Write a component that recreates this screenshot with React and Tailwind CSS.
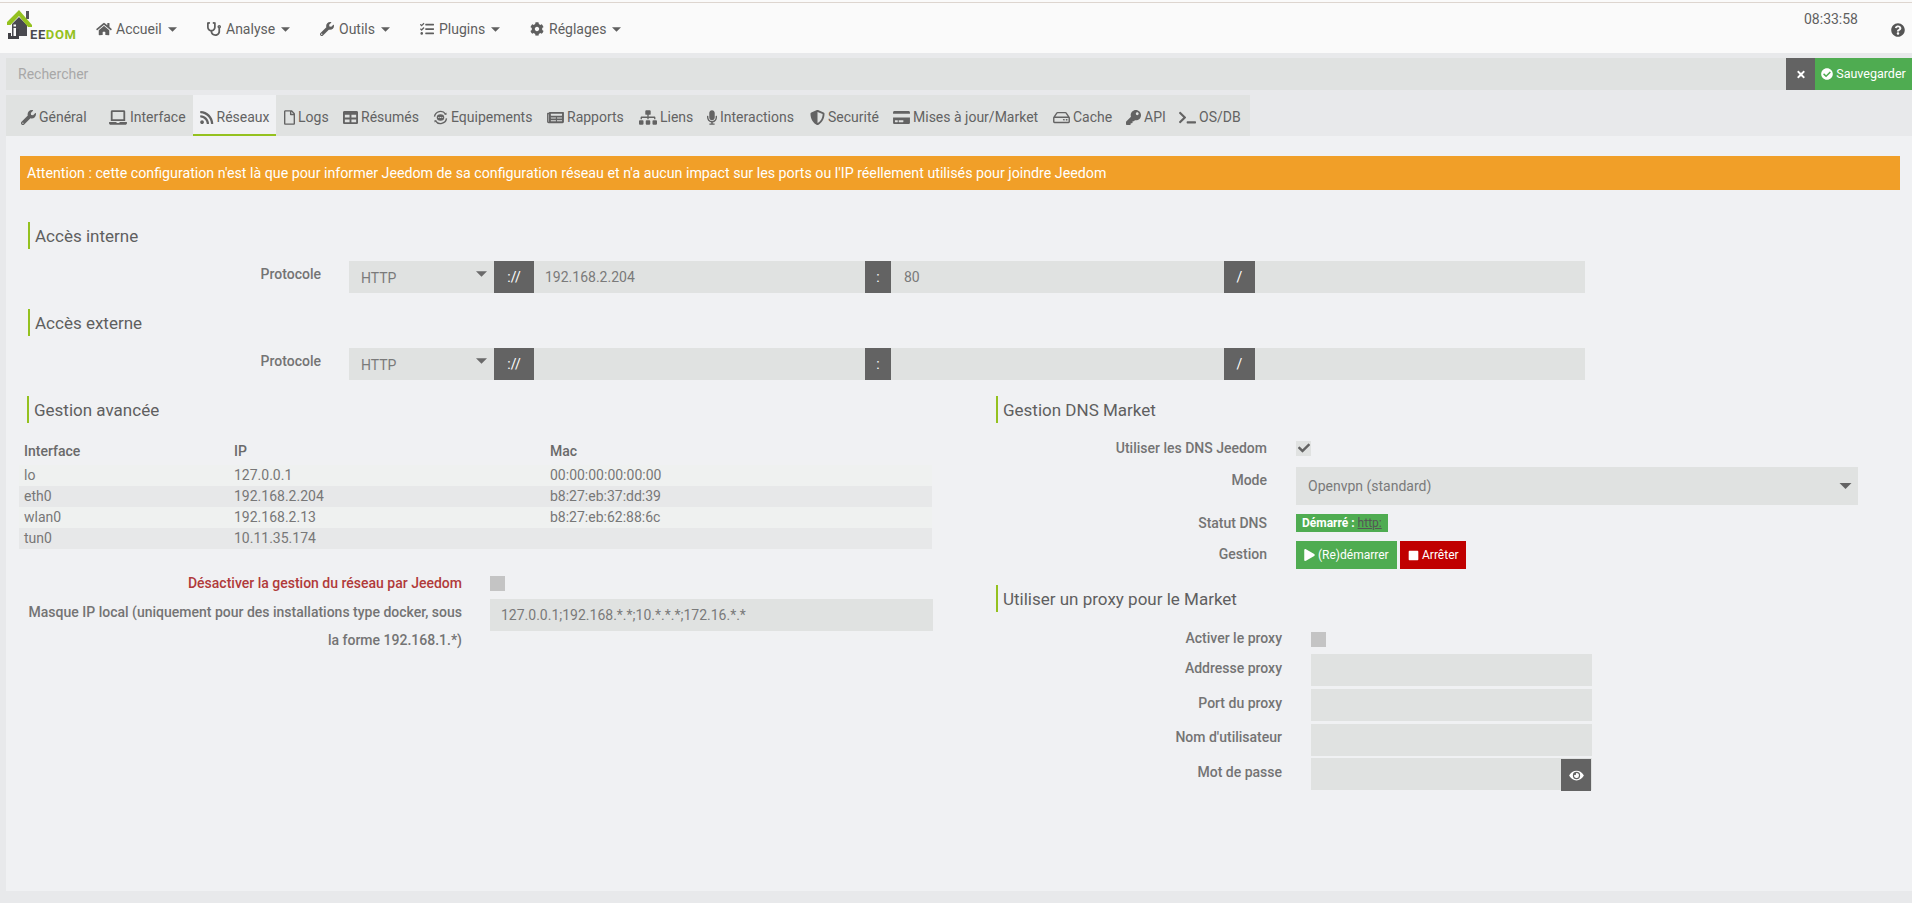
import React from "react";
import {
  FaHome, FaStethoscope, FaWrench, FaTasks, FaCog, FaQuestionCircle, FaTimes, FaCheckCircle,
  FaLaptop, FaRss, FaRegFile, FaTable, FaNewspaper, FaSitemap, FaMicrophone, FaShieldAlt,
  FaCreditCard, FaRegHdd, FaKey, FaTerminal, FaCheck, FaPlay, FaStop, FaEye,
} from "react-icons/fa";

const Caret = ({ className = "" }) => (
  <svg viewBox="0 0 10 5" className={className} fill="currentColor"><path d="M0 0h10L5 5z" /></svg>
);

const EquipIcon = ({ className = "" }) => (
  <svg viewBox="0 0 16 16" className={className} fill="none" stroke="currentColor">
    <path d="M1.6 7A6.5 6.5 0 0 1 13.4 4.4" strokeWidth="1.5" />
    <path d="M14.4 9A6.5 6.5 0 0 1 2.6 11.6" strokeWidth="1.5" />
    <path d="M12 4.8l2.3.5.2-2.6zM4 11.2l-2.3-.5-.2 2.6z" fill="currentColor" stroke="none" />
    <ellipse cx="8" cy="8" rx="4" ry="3.4" fill="currentColor" stroke="none" />
    <path d="M5.6 8h4.8" stroke="#e0e2e1" strokeWidth="1" strokeDasharray="1.2 .6" />
  </svg>
);

const Logo = () => (
  <svg viewBox="0 0 26 32" className="w-[26px] h-[32px] shrink-0">
    <rect x="19" y="2" width="3" height="8" fill="#55555a" />
    <path d="M5 15 L12 8 L20 16 V27 H5z" fill="#4a4a50" />
    <path d="M0 13 L12 1 L25 16 L25 18 L21 18 L12 7 L3.5 16 L0 16z" fill="#94c11f" />
    <path d="M6.5 19 h2.5 v8 h-2.5z M6.5 15.5 h2.5 v2 h-2.5z" fill="#fafafa" />
    <path d="M1 24 h3 v3 h5 V20 h3 v10 H1z" fill="#404045" />
  </svg>
);

const navItems = [
  [FaHome, "Accueil", "w-[110px]"],
  [FaStethoscope, "Analyse", "w-[113px]"],
  [FaWrench, "Outils", "w-[100px]"],
  [FaTasks, "Plugins", "w-[110px]"],
  [FaCog, "Réglages", "w-[100px]"],
];

const tabs = [
  [FaWrench, "Général", "w-[96px] pl-[15px]", "w-[15px]"],
  [FaLaptop, "Interface", "w-[91px] pl-[7px]", "w-[18px]"],
  [FaRss, "Réseaux", "w-[83px] pl-[7px]", "w-[13.5px]", true],
  [FaRegFile, "Logs", "w-[60px] pl-[8px]", "w-[11px]"],
  [FaTable, "Résumés", "w-[90px] pl-[7px]", "w-[15px]"],
  [EquipIcon, "Equipements", "w-[113px] pl-[7px]", "w-[15px]"],
  [FaNewspaper, "Rapports", "w-[92px] pl-[8px]", "w-[17px]"],
  [FaSitemap, "Liens", "w-[68px] pl-[8px]", "w-[18px]"],
  [FaMicrophone, "Interactions", "w-[104px] pl-[8px]", "w-[10px]"],
  [FaShieldAlt, "Securité", "w-[83px] pl-[7px]", "w-[15px]"],
  [FaCreditCard, "Mises à jour/Market", "w-[160px] pl-[7px]", "w-[17px]"],
  [FaRegHdd, "Cache", "w-[73px] pl-[7px]", "w-[17px]"],
  [FaKey, "API", "w-[53px] pl-[7px]", "w-[15px]"],
  [FaTerminal, "OS/DB", "w-[78px] pl-[7px]", "w-[17px]"],
];

const Heading = ({ children, className = "" }) => (
  <div className={`h-[27px] border-l-2 border-[#94c11f] pl-[5px] pt-[1px] flex items-center text-[17px] leading-[26px] text-[#5f5f5f] ${className}`}>
    {children}
  </div>
);

const Addon = ({ children, className = "" }) => (
  <div className={`h-[32px] bg-[#636363] text-white flex items-center justify-center text-[14px] shrink-0 ${className}`}>{children}</div>
);

const Field = ({ children, className = "" }) => (
  <div className={`h-[32px] bg-[#e0e2e1] text-[#7a7a7a] text-[14px] flex items-center shrink-0 ${className}`}>{children}</div>
);

const Label = ({ children, className = "" }) => (
  <div className={`text-right text-[14px] font-medium text-[#747474] ${className}`}>{children}</div>
);

const UrlRow = ({ ip, port, className = "" }) => (
  <div className={`flex items-start ${className}`}>
    <Label className="w-[321px] mt-[3px] leading-[20px] shrink-0">Protocole</Label>
    <Field className="ml-[28px] w-[145px] justify-between pl-[12px] pr-[7px]">
      <span className="mt-[2px]">HTTP</span>
      <Caret className="w-[11px] h-[6px] text-[#6a6a6a] mb-[6px]" />
    </Field>
    <Addon className="w-[40px]">://</Addon>
    <Field className="w-[331px] pl-[11px]">{ip}</Field>
    <Addon className="w-[26px]">:</Addon>
    <Field className="w-[333px] pl-[13px]">{port}</Field>
    <Addon className="w-[31px]">/</Addon>
    <Field className="w-[330px]" />
  </div>
);

const rows = [
  ["lo", "127.0.0.1", "00:00:00:00:00:00", "bg-[#eff1f0]"],
  ["eth0", "192.168.2.204", "b8:27:eb:37:dd:39", "bg-[#e7e8e9]"],
  ["wlan0", "192.168.2.13", "b8:27:eb:62:88:6c", "bg-[#eff1f0]"],
  ["tun0", "10.11.35.174", "", "bg-[#e7e8e9]"],
];

const Check = ({ className = "", children }) => (
  <div className={`w-[15px] h-[15px] flex items-center justify-center shrink-0 ${className}`}>{children}</div>
);

export default function App() {
  return (
    <div className="w-[1912px] h-[903px] overflow-hidden bg-[#e8e9eb] font-['Roboto',sans-serif] text-[14px] text-[#666666] flex flex-col">
      <header className="h-[53px] bg-[#fafafa] shrink-0 pt-[2px]">
        <div className="h-[1px] bg-[#ddd5cf]" />
        <div className="flex">
          <div className="ml-[7px] mt-[6px] h-[32px] flex items-end w-[83px] shrink-0">
            <Logo />
            <span className="ml-[-3px] text-[13px] leading-[11px] font-bold tracking-[0.6px] mb-[1px] whitespace-nowrap">
              <span className="text-[#4a4a50]">EE</span><span className="text-[#94c11f]">DOM</span>
            </span>
          </div>
          <nav className="flex ml-[6px] pt-[14px] text-[#5f5f5f]">
            {navItems.map(([I, t, w]) => (
              <div key={t} className={`flex items-center h-[24px] ${w}`}>
                <I className="w-[16px] h-[14px] mr-[4px] shrink-0" />
                <span>{t}</span>
                <Caret className="w-[9px] h-[5px] ml-[6px]" />
              </div>
            ))}
          </nav>
          <div className="ml-auto flex mr-[7px] text-[#5f5f5f]">
            <span className="mt-[6px] h-[20px] leading-[20px]">08:33:58</span>
            <FaQuestionCircle className="w-[14px] h-[14px] ml-[33px] mt-[20px] text-[#555555]" />
          </div>
        </div>
      </header>

      <div className="h-[32px] mt-[5px] ml-[6px] flex shrink-0">
        <div className="flex-1 bg-[#e0e2e1] text-[#a8a8a8] flex items-center px-[12px]">Rechercher</div>
        <div className="w-[29px] bg-[#636363] text-white flex items-center justify-center"><FaTimes className="w-[10px] h-[11px]" /></div>
        <div className="w-[97px] bg-[#4fac51] text-white flex items-center justify-center text-[12.5px] gap-[3px]">
          <FaCheckCircle className="w-[12px] h-[12px]" />Sauvegarder
        </div>
      </div>

      <div className="h-[41px] mt-[5px] ml-[6px] flex shrink-0">
        {tabs.map(([I, t, w, iw, active]) => (
          <div key={t} className={`${w} shrink-0 flex items-center gap-[3px] whitespace-nowrap text-[#636363] pt-[6px] border-b-2 ${active ? "bg-[#f0f1f3] border-[#94c11f]" : "bg-[#e0e2e1] border-[#e0e2e1]"}`}>
            <I className={`${iw} h-[15px] shrink-0`} />
            <span>{t}</span>
          </div>
        ))}
      </div>

      <main className="h-[755px] ml-[6px] bg-[#f0f1f3] pt-[20px] shrink-0">
        <div className="ml-[14px] mr-[12px] h-[34px] bg-[#f19f28] text-white text-[14.23px] pt-[1px] flex items-center px-[7px]">
          Attention : cette configuration n'est là que pour informer Jeedom de sa configuration réseau et n'a aucun impact sur les ports ou l'IP réellement utilisés pour joindre Jeedom
        </div>

        <Heading className="ml-[22px] mt-[32px]">Accès interne</Heading>
        <UrlRow ip="192.168.2.204" port="80" className="mt-[12px] ml-[-6px]" />
        <Heading className="ml-[22px] mt-[16px]">Accès externe</Heading>
        <UrlRow className="mt-[12px] ml-[-6px]" />

        <div className="flex mt-[16px]">
          <section className="w-[990px] shrink-0 pl-[13px]">
            <Heading className="ml-[8px]">Gestion avancée</Heading>
            <div className="w-[913px] mt-[16px]">
              <div className="grid grid-cols-[210px_316px_1fr] h-[26px] items-center pl-[5px] pb-[2px] font-medium text-[#6a6a6a]">
                <span>Interface</span><span>IP</span><span>Mac</span>
              </div>
              {rows.map(([a, b, c, bg]) => (
                <div key={a} className={`grid grid-cols-[210px_316px_1fr] h-[21px] items-center pl-[5px] text-[#777777] ${bg}`}>
                  <span>{a}</span><span>{b}</span><span>{c}</span>
                </div>
              ))}
            </div>
            <div className="flex mt-[22px] items-center h-[24px]">
              <Label className="w-[443px] text-[#b03a3a]!">Désactiver la gestion du réseau par Jeedom</Label>
              <Check className="ml-[28px] bg-[#c4c4c4]" />
            </div>
            <div className="flex mt-[4px]">
              <Label className="w-[443px] leading-[28px] mt-[-1px]">Masque IP local (uniquement pour des installations type docker, sous la forme 192.168.1.*)</Label>
              <Field className="ml-[28px] w-[443px] pl-[11px]">127.0.0.1;192.168.*.*;10.*.*.*;172.16.*.*</Field>
            </div>
          </section>

          <section className="flex-1">
            <Heading>Gestion DNS Market</Heading>
            <div className="flex items-center h-[20px] mt-[15px]">
              <Label className="w-[271px]">Utiliser les DNS Jeedom</Label>
              <Check className="ml-[29px] bg-[#e0e2e1]"><FaCheck className="w-[12px] h-[12px] text-[#636363]" /></Check>
            </div>
            <div className="flex mt-[9px] items-start">
              <Label className="w-[271px] leading-[20px] mt-[3px]">Mode</Label>
              <Field className="ml-[29px] w-[562px] h-[38px]! justify-between pl-[12px] pr-[6px]">
                <span>Openvpn (standard)</span>
                <Caret className="w-[13px] h-[6px] text-[#636363]" />
              </Field>
            </div>
            <div className="flex mt-[9px] items-center h-[18px]">
              <Label className="w-[271px]">Statut DNS</Label>
              <div className="ml-[29px] w-[92px] h-[18px] bg-[#4fac51] flex items-center px-[6px] text-[12px] leading-[18px] font-bold text-white whitespace-nowrap">
                Démarré :&nbsp;<span className="underline font-normal text-[#555555]">http:</span>
              </div>
            </div>
            <div className="flex mt-[9px] items-start">
              <Label className="w-[271px] leading-[20px] mt-[3px]">Gestion</Label>
              <div className="ml-[29px] w-[101px] h-[28px] bg-[#4fac51] text-white text-[12px] flex items-center pl-[8px] gap-[3px]"><FaPlay className="w-[11px] h-[12px]" />(Re)démarrer</div>
              <div className="ml-[3px] w-[66px] h-[28px] bg-[#c00000] text-white text-[12px] flex items-center pl-[8px] gap-[3px]"><FaStop className="w-[11px] h-[11px]" />Arrêter</div>
            </div>

            <Heading className="mt-[16px]">Utiliser un proxy pour le Market</Heading>
            <div className="flex items-center h-[20px] mt-[18px]">
              <Label className="w-[286px] pb-[4px]">Activer le proxy</Label>
              <Check className="ml-[29px] mt-[-2px] bg-[#c4c4c4]" />
            </div>
            <div className="flex mt-[4px]">
              <Label className="w-[286px] leading-[20px] mt-[4px]">Addresse proxy</Label>
              <Field className="ml-[29px] w-[281px]" />
            </div>
            <div className="flex mt-[3px]">
              <Label className="w-[286px] leading-[20px] mt-[4px]">Port du proxy</Label>
              <Field className="ml-[29px] w-[281px]" />
            </div>
            <div className="flex mt-[3px]">
              <Label className="w-[286px] leading-[20px] mt-[3px]">Nom d'utilisateur</Label>
              <Field className="ml-[29px] w-[281px]" />
            </div>
            <div className="flex mt-[2px]">
              <Label className="w-[286px] leading-[20px] mt-[4px]">Mot de passe</Label>
              <div className="ml-[29px] w-[281px] h-[32px] bg-[#e0e2e1] flex justify-end pr-[1px]">
                <div className="w-[30px] h-[32px] mt-[1px] bg-[#636363] text-white flex items-center justify-center"><FaEye className="w-[15px] h-[13px]" /></div>
              </div>
            </div>
          </section>
        </div>
      </main>
    </div>
  );
}
